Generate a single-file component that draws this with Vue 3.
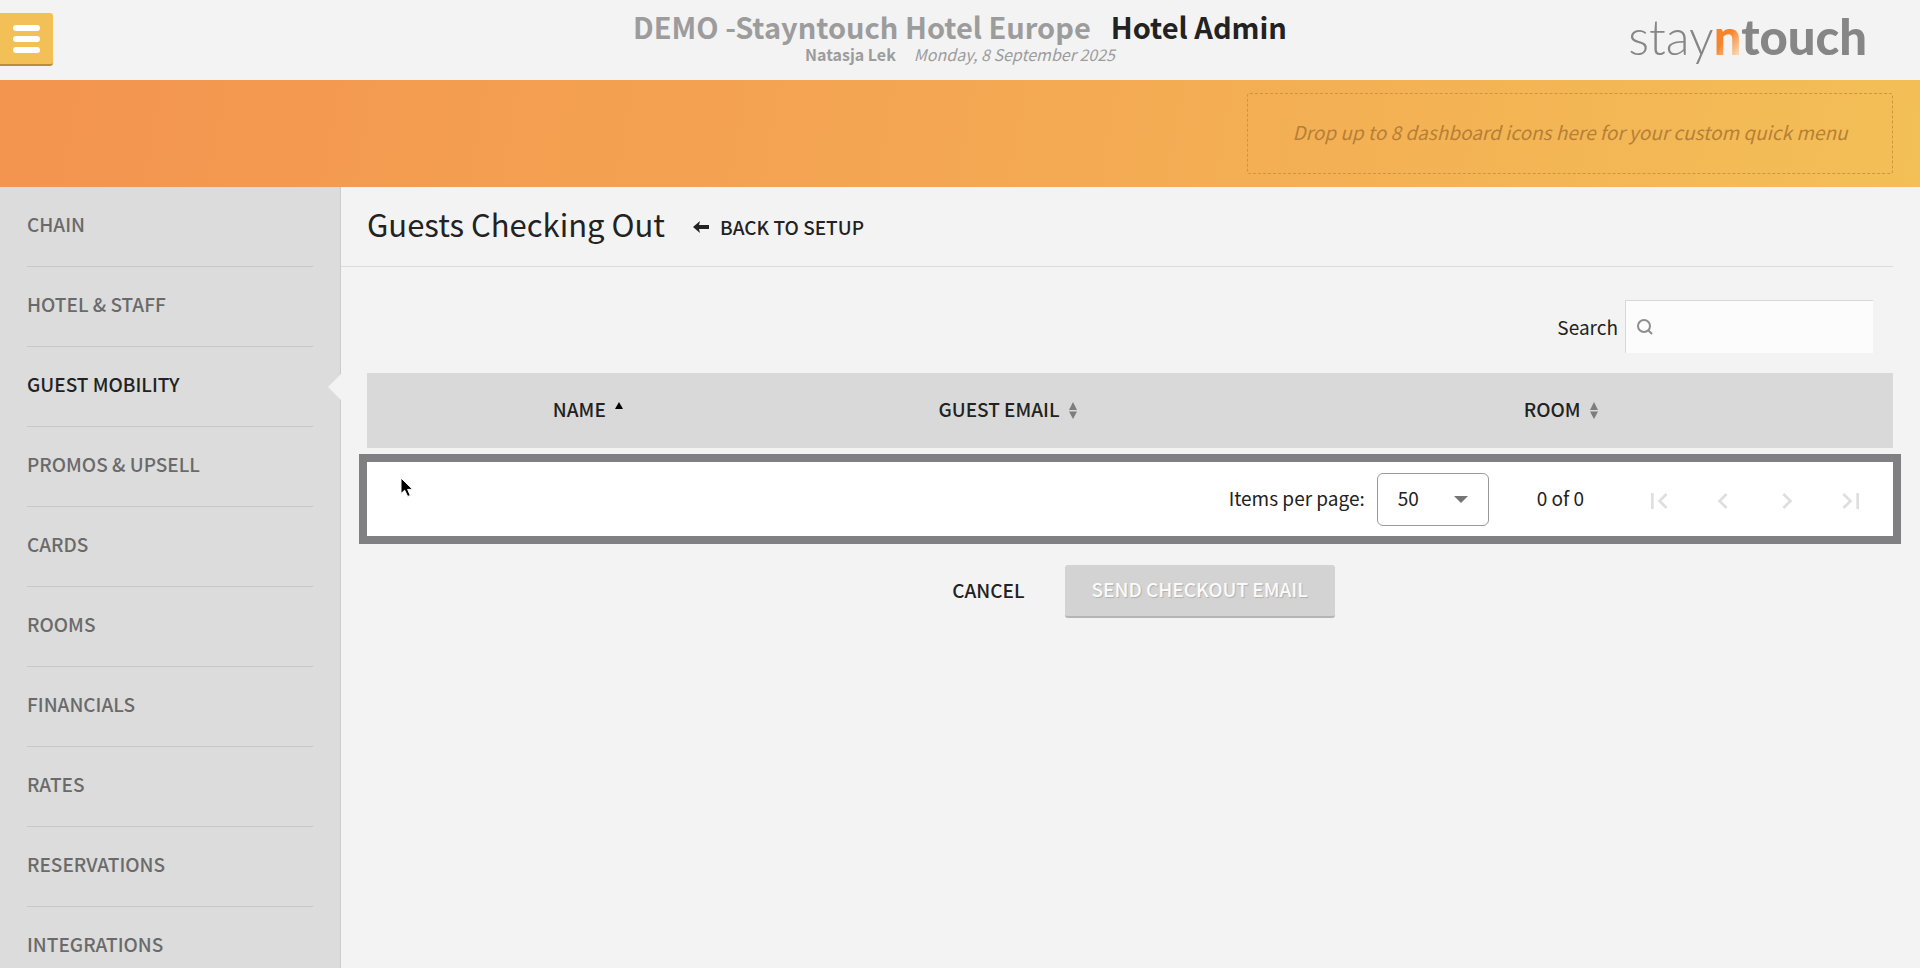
<template>
  <div class="page">
    <header class="top">
      <button class="menu-btn" type="button" aria-label="Menu">
        <span></span>
        <span></span>
        <span></span>
      </button>
      <div class="heading">
        <h1>
          <span class="muted">DEMO -Stayntouch Hotel Europe</span>
          <span>Hotel Admin</span>
        </h1>
        <p><strong>Natasja Lek</strong><em>Monday, 8 September 2025</em></p>
      </div>
      <a class="logo" href="#"><span class="thin">stay</span><span class="flame">n</span>touch</a>
    </header>

    <div class="quick-menu">
      <div class="drop-zone">Drop up to 8 dashboard icons here for your custom quick menu</div>
    </div>

    <div class="body">
      <nav class="sidebar">
        <ul>
          <li v-for="item in menu" :key="item" :class="{ active: item === current }">
            <a href="#" @click.prevent="current = item">{{ item }}</a>
          </li>
        </ul>
      </nav>

      <main class="content">
        <div class="title-bar">
          <h2>Guests Checking Out</h2>
          <a href="#" class="back">
            <svg width="16" height="12" viewBox="0 0 16 12">
              <path d="M0 6 L7 0 L6 4 H16 V8 H6 L7 12 Z" fill="currentColor" />
            </svg>
            BACK TO SETUP
          </a>
        </div>

        <div class="search">
          <label for="search">Search</label>
          <div class="search-box">
            <svg width="16" height="16" viewBox="0 0 16 16" fill="none" stroke="#8e8e8e" stroke-width="2">
              <circle cx="7" cy="7" r="6" />
              <path d="M11 11 L15 15" />
            </svg>
            <input id="search" v-model="query" type="text" />
          </div>
        </div>

        <table class="guests">
          <thead>
            <tr>
              <th v-for="col in columns" :key="col.key" :class="col.key">
                <button type="button" @click="sortBy = col.key">
                  {{ col.label }}
                  <svg v-if="sortBy === col.key" width="8" height="17" viewBox="0 0 8 17">
                    <path d="M4 0 L8 7 H0 Z" fill="#000" />
                  </svg>
                  <svg v-else width="8" height="17" viewBox="0 0 8 17">
                    <path d="M4 0 L8 8 H0 Z M0 9.5 H8 L4 17 Z" fill="#7d7d7d" />
                  </svg>
                </button>
              </th>
            </tr>
          </thead>
        </table>

        <div class="pager">
          <svg class="cursor" width="16" height="22" viewBox="0 0 16 22">
            <path
              d="M1 1 V16.5 L4.7 13.2 L7.7 19.5 L10.3 18.4 L7.6 12.4 H12.6 Z"
              fill="#000"
              stroke="#fff"
              stroke-width="1"
            />
          </svg>
          <label for="per-page">Items per page:</label>
          <div class="select">
            <select id="per-page" v-model="perPage">
              <option>10</option>
              <option>25</option>
              <option>50</option>
            </select>
            <svg width="14" height="7" viewBox="0 0 14 7"><path d="M0 0 H14 L7 7 Z" fill="#757575" /></svg>
          </div>
          <span class="range">0 of 0</span>
          <div class="steps">
            <button v-for="step in steps" :key="step.label" type="button" :aria-label="step.label" disabled>
              <svg width="32" height="32" viewBox="0 0 24 24"><path :d="step.path" fill="currentColor" /></svg>
            </button>
          </div>
        </div>

        <div class="actions">
          <button type="button" class="cancel">CANCEL</button>
          <button type="button" class="send" disabled>SEND CHECKOUT EMAIL</button>
        </div>
      </main>
    </div>
  </div>
</template>

<script setup>
import { ref } from 'vue';

const menu = [
  'CHAIN',
  'HOTEL & STAFF',
  'GUEST MOBILITY',
  'PROMOS & UPSELL',
  'CARDS',
  'ROOMS',
  'FINANCIALS',
  'RATES',
  'RESERVATIONS',
  'INTEGRATIONS'
];

const columns = [
  { key: 'name', label: 'NAME' },
  { key: 'email', label: 'GUEST EMAIL' },
  { key: 'room', label: 'ROOM' }
];

const steps = [
  { label: 'First page', path: 'M18.41 16.59L13.82 12l4.59-4.59L17 6l-6 6 6 6zM6 6h2v12H6z' },
  { label: 'Previous page', path: 'M15.41 7.41L14 6l-6 6 6 6 1.41-1.41L10.83 12z' },
  { label: 'Next page', path: 'M10 6L8.59 7.41 13.17 12l-4.58 4.59L10 18l6-6z' },
  { label: 'Last page', path: 'M5.59 7.41L10.18 12l-4.59 4.59L7 18l6-6-6-6zM16 6h2v12h-2z' }
];

const current = ref('GUEST MOBILITY');
const query = ref('');
const sortBy = ref('name');
const perPage = ref('50');
</script>

<style>
body {
  background: #f3f3f3;
}
</style>

<style scoped>
.page {
  height: 100vh;
  display: flex;
  flex-direction: column;
  overflow: hidden;
  background: #f3f3f3;
  color: #222;
  font-family: "Noto Sans CJK SC", "Noto Sans", sans-serif;
  font-size: 19px;
  line-height: 28px;
}

* {
  box-sizing: border-box;
}

a {
  color: inherit;
  text-decoration: none;
}

button,
input,
select {
  font: inherit;
  color: inherit;
  border: 0;
  padding: 0;
  background: none;
}

h1,
h2,
p,
ul {
  margin: 0;
  padding: 0;
  font-weight: normal;
}

/* header */
.top {
  flex: none;
  height: 80px;
  display: grid;
  grid-template-columns: 1fr auto 1fr;
  align-items: start;
}

.menu-btn {
  width: 53px;
  height: 53px;
  margin-top: 13px;
  padding-left: 13px;
  display: flex;
  flex-direction: column;
  justify-content: center;
  gap: 5px;
  background: #f3bf57;
  border-bottom: 2px solid #b98d3c;
  border-radius: 0 3px 3px 0;
}

.menu-btn span {
  width: 27px;
  height: 6px;
  border-radius: 3px;
  background: #fff;
}

.heading {
  padding-top: 8px;
  text-align: center;
}

.heading h1 {
  display: flex;
  gap: 20px;
  font-size: 29px;
  line-height: 36px;
  font-weight: bold;
}

.muted {
  color: #9c9c9c;
}

.heading p {
  display: flex;
  justify-content: center;
  gap: 18px;
  font-size: 16px;
  line-height: 20px;
  color: #9c9c9c;
}

.logo {
  justify-self: end;
  margin-right: 53px;
  padding-top: 6px;
  font-family: Lato, sans-serif;
  font-size: 49px;
  line-height: 60px;
  font-weight: 900;
  color: #868686;
}

.thin {
  font-weight: 300;
}

.flame {
  background: linear-gradient(130deg, #f5842b 50%, #fbd9b8 85%);
  background-clip: text;
  color: transparent;
}

/* quick menu */
.quick-menu {
  flex: none;
  height: 107px;
  padding: 13px 27px;
  display: flex;
  justify-content: flex-end;
  background: linear-gradient(100deg, #f3944f, #f4a752 50%, #f3bf57);
}

.drop-zone {
  width: 646px;
  padding-bottom: 4px;
  display: flex;
  align-items: center;
  justify-content: center;
  border: 1px dashed #cf9440;
  border-radius: 3px;
  font-style: italic;
  color: #b67f38;
}

.body {
  flex: 1;
  min-height: 0;
  display: flex;
}

/* sidebar */
.sidebar {
  flex: none;
  width: 341px;
  padding: 0 27px;
  background: #dcdcdc;
  border-right: 1px solid #cbcbcb;
}

.sidebar ul {
  list-style: none;
}

.sidebar li {
  position: relative;
  border-bottom: 1px solid #c8c8c8;
  font-weight: 500;
  color: #6a6a6a;
}

.sidebar a {
  display: block;
  padding-bottom: 5px;
  line-height: 74px;
}

.sidebar .active {
  color: #222;
}

.sidebar .active::after {
  content: "";
  position: absolute;
  top: 27px;
  right: -28px;
  border: 13px solid transparent;
  border-left: 0;
  border-right-color: #f3f3f3;
}

/* content */
.content {
  flex: 1;
  min-width: 0;
  padding-right: 27px;
}

.title-bar {
  height: 80px;
  padding-left: 26px;
  display: flex;
  align-items: center;
  gap: 28px;
  border-bottom: 1px solid #dcdcdc;
}

.title-bar h2 {
  padding-bottom: 5px;
  font-size: 31px;
  line-height: 40px;
}

.back {
  display: flex;
  align-items: center;
  gap: 11px;
  font-weight: 500;
}

.search {
  margin: 33px 20px 20px 0;
  display: flex;
  align-items: center;
  justify-content: flex-end;
  gap: 7px;
}

.search-box {
  width: 248px;
  height: 53px;
  padding: 0 11px;
  display: flex;
  align-items: center;
  gap: 8px;
  background: #fcfcfc;
  border-top: 1px solid #d8d8d8;
  border-left: 1px solid #d8d8d8;
}

.search-box input {
  flex: 1;
  min-width: 0;
  outline: none;
}

.guests {
  width: calc(100% - 26px);
  margin-left: 26px;
  table-layout: fixed;
  border-collapse: collapse;
  background: #d9d9d9;
}

.guests th {
  height: 75px;
  padding: 0 0 4px 22px;
  font-weight: 500;
}

/* name and email share what is left */
.guests .room {
  width: 45%;
}

.guests button {
  display: inline-flex;
  align-items: center;
  gap: 9px;
}

.guests svg {
  margin-top: 4px;
}

.pager {
  position: relative;
  margin: 6px -8px 0 18px;
  height: 90px;
  padding-right: 10px;
  display: flex;
  align-items: center;
  justify-content: flex-end;
  background: #fff;
  border: 8px solid #808082;
}

.cursor {
  position: absolute;
  left: 33px;
  top: 15px;
}

.pager label,
.range {
  padding-bottom: 2px;
}

.select {
  width: 112px;
  height: 53px;
  margin: 0 48px 0 12px;
  display: grid;
  align-items: center;
  border: 1px solid #999;
  border-radius: 6px;
}

.select select,
.select svg {
  grid-area: 1 / 1;
}

.select select {
  height: 51px;
  padding: 0 0 2px 20px;
  appearance: none;
}

.select svg {
  justify-self: end;
  margin-right: 20px;
  pointer-events: none;
}

.steps {
  margin-left: 43px;
  padding-top: 4px;
  display: flex;
}

.steps button {
  width: 64px;
  height: 32px;
  color: #dedede;
}

.steps svg {
  display: block;
  margin: 0 auto;
}

.actions {
  margin-top: 21px;
  padding-left: 26px;
  display: flex;
  justify-content: center;
  gap: 13px;
}

.actions button {
  height: 53px;
  padding: 0 27px 3px;
  font-weight: 500;
}

.send {
  background: #d3d3d3;
  border-bottom: 2px solid #b5b5b5;
  border-radius: 3px;
  color: #fafafa;
  text-shadow: 1px 1px 1px #b0b0b0;
}
</style>
